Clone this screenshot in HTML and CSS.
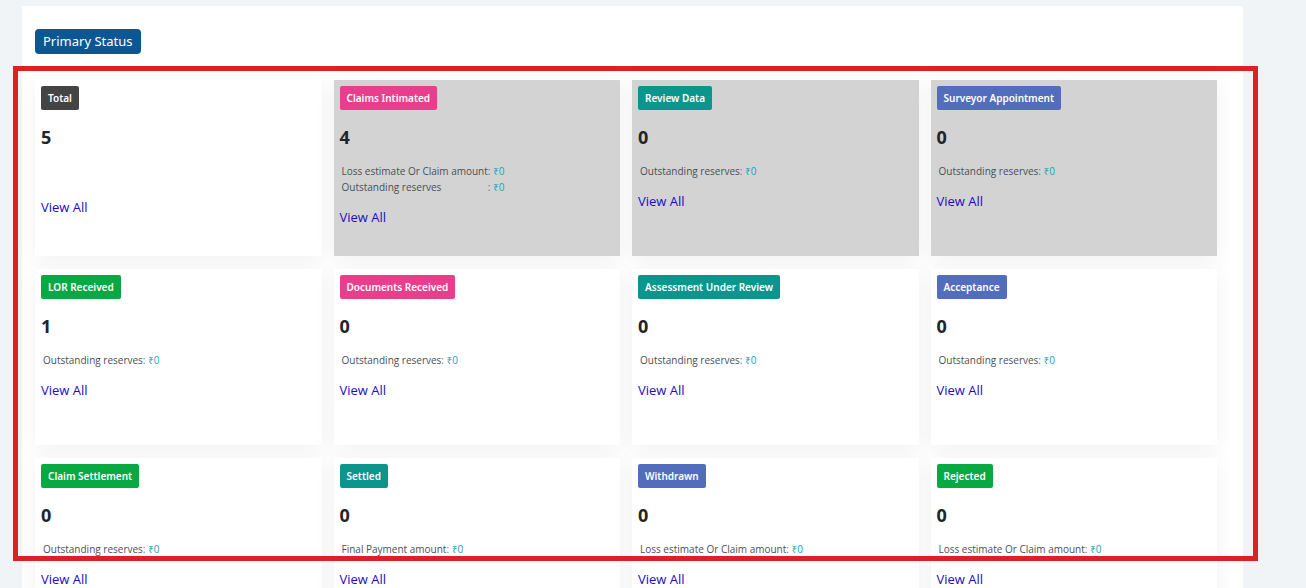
FILE: index.html
```
<!DOCTYPE html>
<html lang="en">
<head>
<meta charset="utf-8">
<title>Primary Status</title>
<link rel="stylesheet" href="styles.css">
</head>
<body>
<div class="page">
  <main class="panel">
    <h1 class="panel-title">Primary Status</h1>
    <div class="cards">
      <section class="card">
        <h2 class="badge dark">Total</h2>
        <p class="count">5</p>
        <div class="details"></div>
        <a class="view" href="#total">View All</a>
      </section>
      <section class="card shaded">
        <h2 class="badge pink">Claims Intimated</h2>
        <p class="count">4</p>
        <dl class="details">
          <dt>Loss estimate Or Claim amount</dt><dd><span class="sep">:</span> ₹0</dd>
          <dt>Outstanding reserves</dt><dd><span class="sep">:</span> ₹0</dd>
        </dl>
        <a class="view" href="#intimated">View All</a>
      </section>
      <section class="card shaded">
        <h2 class="badge teal">Review Data</h2>
        <p class="count">0</p>
        <dl class="details"><dt>Outstanding reserves</dt><dd><span class="sep">:</span> ₹0</dd></dl>
        <a class="view" href="#review">View All</a>
      </section>
      <section class="card shaded">
        <h2 class="badge blue">Surveyor Appointment</h2>
        <p class="count">0</p>
        <dl class="details"><dt>Outstanding reserves</dt><dd><span class="sep">:</span> ₹0</dd></dl>
        <a class="view" href="#surveyor">View All</a>
      </section>
      <section class="card">
        <h2 class="badge green">LOR Received</h2>
        <p class="count">1</p>
        <dl class="details"><dt>Outstanding reserves</dt><dd><span class="sep">:</span> ₹0</dd></dl>
        <a class="view" href="#lor">View All</a>
      </section>
      <section class="card">
        <h2 class="badge pink">Documents Received</h2>
        <p class="count">0</p>
        <dl class="details"><dt>Outstanding reserves</dt><dd><span class="sep">:</span> ₹0</dd></dl>
        <a class="view" href="#documents">View All</a>
      </section>
      <section class="card">
        <h2 class="badge teal">Assessment Under Review</h2>
        <p class="count">0</p>
        <dl class="details"><dt>Outstanding reserves</dt><dd><span class="sep">:</span> ₹0</dd></dl>
        <a class="view" href="#assessment">View All</a>
      </section>
      <section class="card">
        <h2 class="badge blue">Acceptance</h2>
        <p class="count">0</p>
        <dl class="details"><dt>Outstanding reserves</dt><dd><span class="sep">:</span> ₹0</dd></dl>
        <a class="view" href="#acceptance">View All</a>
      </section>
      <section class="card">
        <h2 class="badge green">Claim Settlement</h2>
        <p class="count">0</p>
        <dl class="details"><dt>Outstanding reserves</dt><dd><span class="sep">:</span> ₹0</dd></dl>
        <a class="view" href="#settlement">View All</a>
      </section>
      <section class="card">
        <h2 class="badge teal">Settled</h2>
        <p class="count">0</p>
        <dl class="details"><dt>Final Payment amount</dt><dd><span class="sep">:</span> ₹0</dd></dl>
        <a class="view" href="#settled">View All</a>
      </section>
      <section class="card">
        <h2 class="badge blue">Withdrawn</h2>
        <p class="count">0</p>
        <dl class="details"><dt>Loss estimate Or Claim amount</dt><dd><span class="sep">:</span> ₹0</dd></dl>
        <a class="view" href="#withdrawn">View All</a>
      </section>
      <section class="card">
        <h2 class="badge green">Rejected</h2>
        <p class="count">0</p>
        <dl class="details"><dt>Loss estimate Or Claim amount</dt><dd><span class="sep">:</span> ₹0</dd></dl>
        <a class="view" href="#rejected">View All</a>
      </section>
    </div>
  </main>
  <div class="highlight"></div>
</div>
</body>
</html>
```
FILE: styles.css
```
* { box-sizing: border-box; }

body {
  margin: 0;
  background: #f0f4f7;
  color: #212529;
  font-family: "Open Sans", "Noto Sans", sans-serif;
}

.page {
  position: relative;
  height: 100vh;
  overflow: hidden;
  padding: 6px 63px 0 22px;
}

.panel {
  background: #fff;
  padding: 23px 26px 24px 13px;
}

.panel-title {
  width: fit-content;
  margin: 0 0 26px;
  padding: 0 8px;
  border-radius: 4px;
  background: #0b5793;
  color: #fff;
  font-family: "Noto Sans", sans-serif;
  font-size: 13px;
  font-weight: 400;
  line-height: 25px;
}

.cards {
  display: grid;
  grid-template-columns: repeat(4, 1fr);
  gap: 13px 12px;
}

.card {
  display: flex;
  flex-direction: column;
  align-items: flex-start;
  min-height: 176px;
  padding: 6px;
  background: #fff;
  box-shadow: 0 4px 20px 1px rgba(0, 0, 0, 0.05);
}

.shaded { background: #d3d3d3; }

.badge {
  margin: 0 0 14px;
  padding: 0 7px;
  border-radius: 2px;
  color: #fff;
  font-family: "Noto Sans", sans-serif;
  font-size: 10px;
  font-weight: 600;
  line-height: 24px;
}

.dark { background: #444; }
.pink { background: #e83e8c; }
.teal { background: #0b968d; }
.blue { background: #536dbd; }
.green { background: #08a843; }

.count {
  margin: 0 0 13px;
  font-size: 18px;
  font-weight: 700;
  line-height: 26px;
}

.details {
  display: grid;
  grid-template-columns: auto auto;
  margin: 0 0 12px;
  padding-left: 2px;
  color: #495057;
  font-size: 10px;
  line-height: 16px;
}

.details:empty { height: 22px; }

.details dd {
  margin: 0;
  color: #17a2b8;
}

.sep { color: #6c757d; }

.view {
  color: #2408c8;
  font-size: 13px;
  line-height: 20px;
  text-decoration: none;
}

/* Outline laid over the status cards */
.highlight {
  position: absolute;
  top: 66px;
  left: 13px;
  right: 48px;
  height: 495px;
  border: 5px solid #db2128;
  pointer-events: none;
}
```
